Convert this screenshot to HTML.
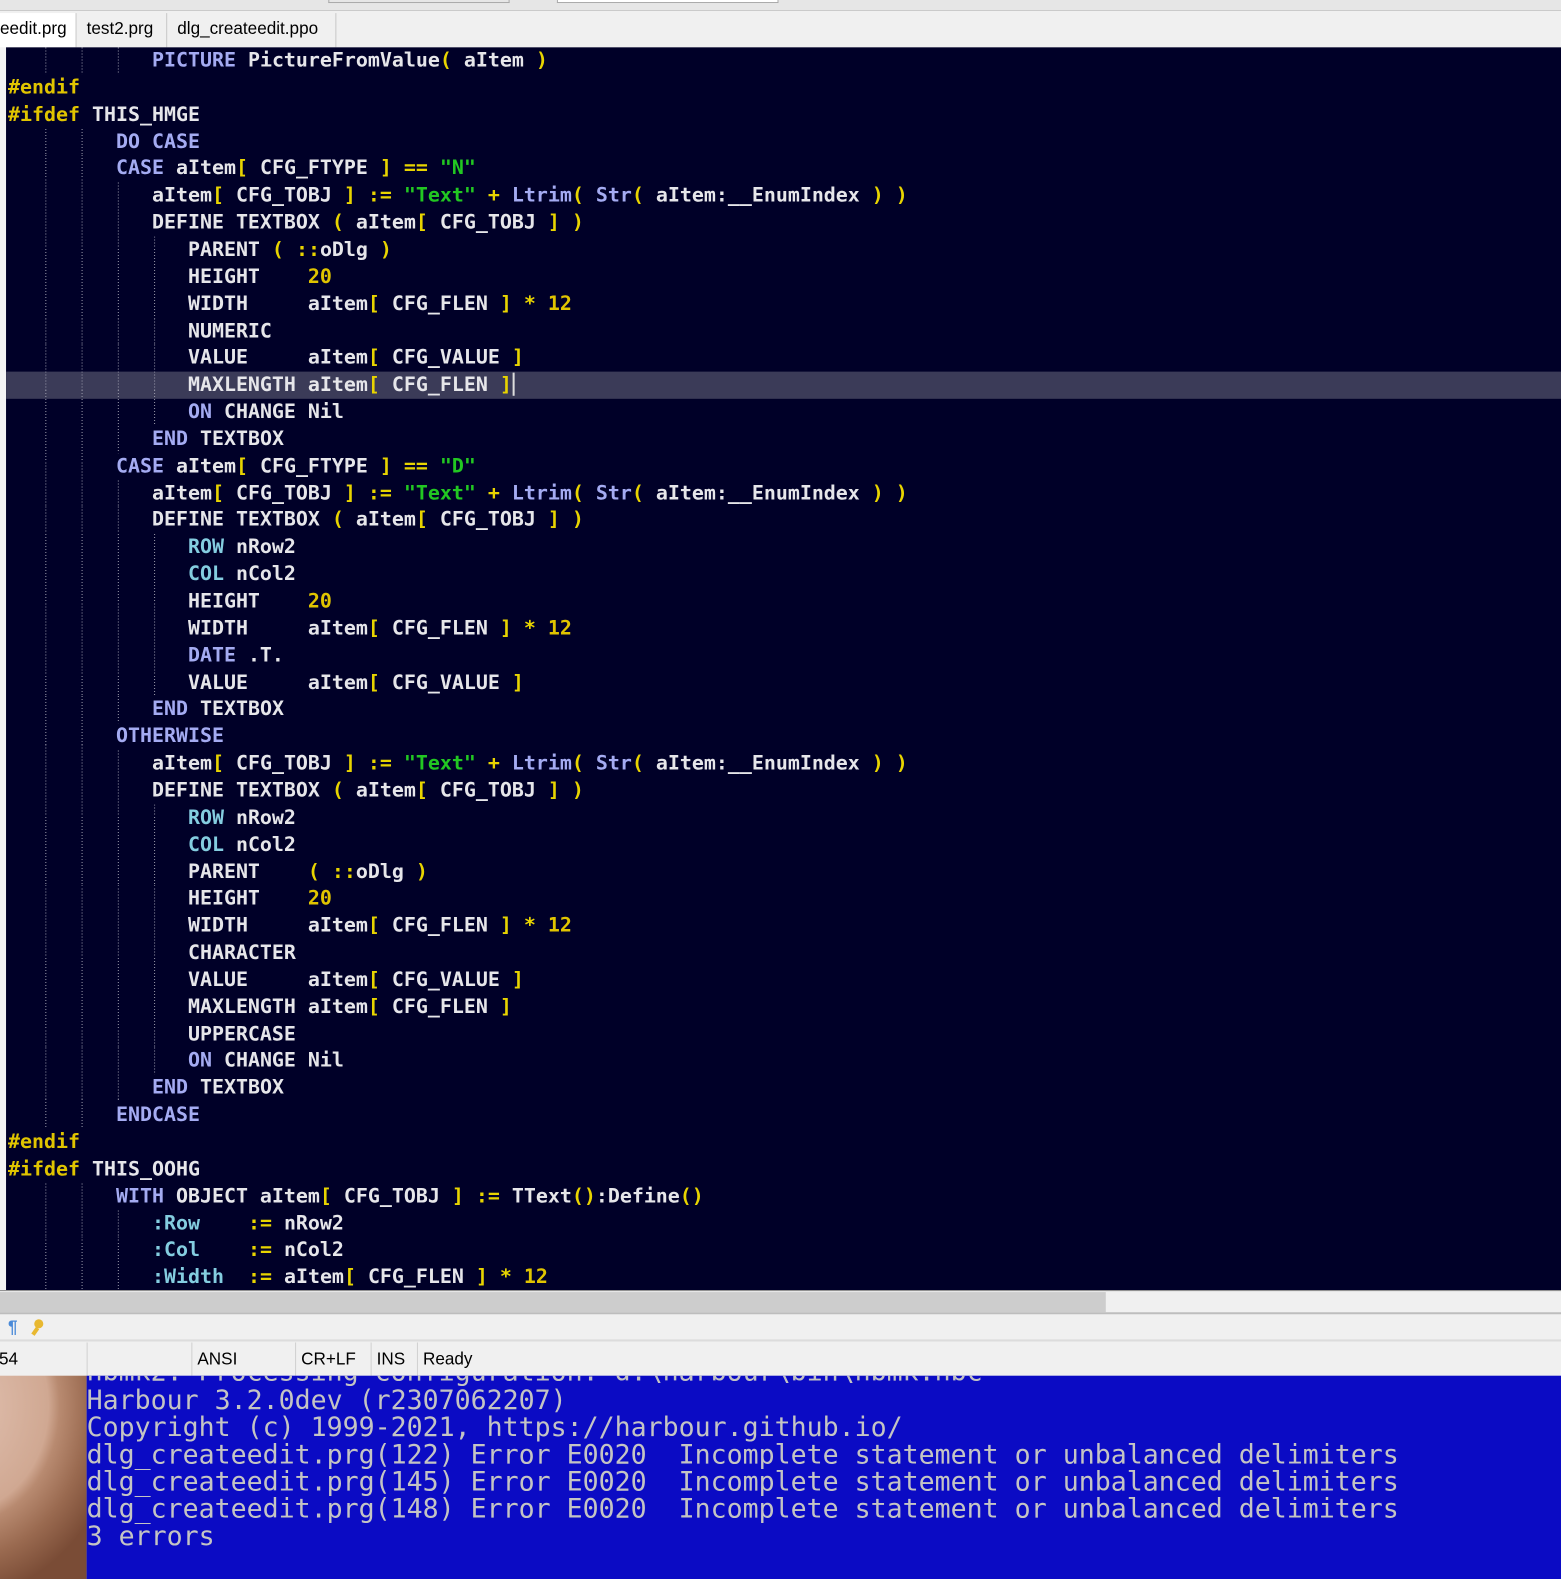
<!DOCTYPE html>
<html><head><meta charset="utf-8"><style>
*{margin:0;padding:0;box-sizing:border-box}
html,body{width:1561px;height:1579px;overflow:hidden;background:#f0f0f0}
#outer{position:absolute;left:0;top:0;width:1561px;height:1579px;overflow:hidden}
#wrap{position:absolute;left:0;top:0;width:1550px;height:1568px;overflow:hidden;transform:scale(1.0071);transform-origin:0 0;font-family:"Liberation Sans",sans-serif}
.abs{position:absolute}
#top{left:0;top:0;width:1550px;height:11px;background:#e6e6e6;border-bottom:1px solid #c8c8c8}
#tabs{left:0;top:11px;width:1550px;height:36px;background:#f0f0f0;font-size:17px;color:#000}
.tab{position:absolute;top:2px;height:34px;line-height:32px;border-right:1px solid #c8c8c8;padding-left:10px}
#ed{left:6px;top:47px;width:1544px;height:1234px;background:#000028;overflow:hidden}
#gut{left:0;top:47px;width:6px;height:1234px;background:#f4f4f4}
.l{position:absolute;left:0;width:1544px;height:26.85px;line-height:26.85px;white-space:pre;font-family:"DejaVu Sans Mono",monospace;font-weight:bold;font-size:19.8px;color:#e6e6ea;padding-left:2px;background-repeat:no-repeat;background-size:1px 100%}
.k{color:#a4abf2}.c{color:#84cde0}.y{color:#e8d400}.s{color:#22c722}.p{color:#e0c400}
.cur{background-color:#3b3b58}
#hs{left:0;top:1281px;width:1550px;height:24px;background:#f0f0f0;border-top:1px solid #888;border-bottom:2px solid #bdbdbd}
#thumb{left:0;top:1283px;width:1098px;height:20px;background:#cdcdcd}
#tb{left:0;top:1306px;width:1550px;height:26px;background:#f0f0f0;border-bottom:2px solid #dcdcdc}
#sb{left:0;top:1333px;width:1550px;height:33px;background:#f0f0f0;font-size:17px;line-height:33px}
.sp{position:absolute;top:0;height:33px;border-left:1px solid #d0d0d0;padding-left:5px}
#con{left:86px;top:1366px;width:1464px;height:202px;background:#0b0bc4;overflow:hidden}
.cl{position:absolute;left:0;white-space:pre;font-family:"DejaVu Sans Mono",monospace;font-size:26.4px;line-height:27px;color:#c4c4c4}
#photo{left:0;top:1366px;width:86px;height:202px;background:radial-gradient(ellipse 160px 190px at -40px 30px,#e2c2b2 0%,#d0a892 55%,#b88a70 62%,#9a6a50 80%,#7a4c36 100%)}
</style></head><body><div id="outer"><div id="wrap">
<div id="top" class="abs"><div class="abs" style="left:326px;top:0;width:180px;height:3px;border:1px solid #aaa;border-top:0"></div><div class="abs" style="left:553px;top:0;width:220px;height:3px;background:#fff;border:1px solid #aaa;border-top:0"></div></div>
<div id="tabs" class="abs">
<div class="tab" style="left:0;width:76px;background:#fff;padding-left:0">eedit.prg</div>
<div class="tab" style="left:76px;width:90px">test2.prg</div>
<div class="tab" style="left:166px;width:168px">dlg_createedit.ppo</div>
</div>
<div id="gut" class="abs"></div>
<div id="ed" class="abs">
<div id="code"></div>
</div>
<div id="hs" class="abs"></div><div id="thumb" class="abs"></div>
<div id="tb" class="abs"><span class="abs" style="left:8px;top:2px;color:#4a8ad8;font-size:17px;font-weight:bold">¶</span><span class="abs" style="left:34px;top:4px;width:9px;height:9px;border-radius:50%;background:#e8b830"></span><span class="abs" style="left:33px;top:12px;width:4px;height:8px;background:#e8b830;transform:rotate(35deg)"></span></div>
<div id="sb" class="abs">
<div class="sp" style="left:-6px;border:0">54</div>
<div class="sp" style="left:86px;width:104px"></div>
<div class="sp" style="left:190px">ANSI</div>
<div class="sp" style="left:293px">CR+LF</div>
<div class="sp" style="left:368px">INS</div>
<div class="sp" style="left:414px">Ready</div>
</div>
<div id="photo" class="abs"></div>
<div id="con" class="abs">
<div class="cl" style="top:-17px">hbmk2: Processing configuration: d:\harbour\bin\hbmk.hbc</div>
<div class="cl" style="top:11px">Harbour 3.2.0dev (r2307062207)</div>
<div class="cl" style="top:38px">Copyright (c) 1999-2021, https://harbour.github.io/</div>
<div class="cl" style="top:65px">dlg_createedit.prg(122) Error E0020  Incomplete statement or unbalanced delimiters</div>
<div class="cl" style="top:92px">dlg_createedit.prg(145) Error E0020  Incomplete statement or unbalanced delimiters</div>
<div class="cl" style="top:119px">dlg_createedit.prg(148) Error E0020  Incomplete statement or unbalanced delimiters</div>
<div class="cl" style="top:146px">3 errors</div>
<div class="cl" style="top:200px">hbmk2: Error: Running Harbour compiler</div>
</div>
</div></div>
<script>
var Y='<span class="y">',S='<span class="s">',K='<span class="k">',C='<span class="c">',P='<span class="p">',E='</span>';
function ai(x){return 'aItem'+Y+'['+E+' '+x+' '+Y+']'+E;}
var asg=ai('CFG_TOBJ')+' '+Y+':='+E+' '+S+'"Text"'+E+' '+Y+'+'+E+' '+K+'Ltrim'+E+Y+'('+E+' '+K+'Str'+E+Y+'('+E+' aItem:__EnumIndex '+Y+')'+E+' '+Y+')'+E;
var def='DEFINE TEXTBOX '+Y+'('+E+' '+ai('CFG_TOBJ')+' '+Y+')'+E;
var wid='WIDTH     '+ai('CFG_FLEN')+' '+Y+'*'+E+' '+P+'12'+E;
var L=[
[12,3,K+'PICTURE'+E+' PictureFromValue'+Y+'('+E+' aItem '+Y+')'+E],
[0,0,P+'#endif'+E],
[0,0,P+'#ifdef'+E+' THIS_HMGE'],
[9,2,K+'DO CASE'+E],
[9,2,K+'CASE'+E+' '+ai('CFG_FTYPE')+' '+Y+'=='+E+' '+S+'"N"'+E],
[12,3,asg],[12,3,def],
[15,4,'PARENT '+Y+'('+E+' '+Y+'::'+E+'oDlg '+Y+')'+E],
[15,4,'HEIGHT    '+P+'20'+E],[15,4,wid],[15,4,'NUMERIC'],
[15,4,'VALUE     '+ai('CFG_VALUE')],
[15,4,'MAXLENGTH '+ai('CFG_FLEN'),1],
[15,4,K+'ON'+E+' CHANGE Nil'],
[12,3,K+'END'+E+' TEXTBOX'],
[9,2,K+'CASE'+E+' '+ai('CFG_FTYPE')+' '+Y+'=='+E+' '+S+'"D"'+E],
[12,3,asg],[12,3,def],
[15,4,C+'ROW'+E+' nRow2'],[15,4,C+'COL'+E+' nCol2'],
[15,4,'HEIGHT    '+P+'20'+E],[15,4,wid],[15,4,K+'DATE'+E+' .T.'],
[15,4,'VALUE     '+ai('CFG_VALUE')],
[12,3,K+'END'+E+' TEXTBOX'],
[9,2,K+'OTHERWISE'+E],
[12,3,asg],[12,3,def],
[15,4,C+'ROW'+E+' nRow2'],[15,4,C+'COL'+E+' nCol2'],
[15,4,'PARENT    '+Y+'('+E+' '+Y+'::'+E+'oDlg '+Y+')'+E],
[15,4,'HEIGHT    '+P+'20'+E],[15,4,wid],[15,4,'CHARACTER'],
[15,4,'VALUE     '+ai('CFG_VALUE')],
[15,4,'MAXLENGTH '+ai('CFG_FLEN')],
[15,4,'UPPERCASE'],[15,4,K+'ON'+E+' CHANGE Nil'],
[12,3,K+'END'+E+' TEXTBOX'],
[9,2,K+'ENDCASE'+E],
[0,0,P+'#endif'+E],
[0,0,P+'#ifdef'+E+' THIS_OOHG'],
[9,2,K+'WITH'+E+' OBJECT '+ai('CFG_TOBJ')+' '+Y+':='+E+' TText'+Y+'()'+E+':Define'+Y+'()'+E],
[12,3,C+':Row'+E+'    '+Y+':='+E+' nRow2'],
[12,3,C+':Col'+E+'    '+Y+':='+E+' nCol2'],
[12,3,C+':Width'+E+'  '+Y+':='+E+' '+ai('CFG_FLEN')+' '+Y+'*'+E+' '+P+'12'+E]
];
var R='repeating-linear-gradient(#9a9aaa 0 1px,transparent 1px 3px)';
var pos=[39,75,111,147],h='';
L.forEach(function(a,i){
 var bi=[],bp=[];for(var g=0;g<a[1];g++){bi.push(R);bp.push(pos[g]+'px 0');}
 var st='top:'+(i*26.85)+'px;'+(bi.length?'background-image:'+bi.join(',')+';background-position:'+bp.join(',')+';':'');
 var txt=new Array(a[0]+1).join(' ')+a[2]+(a[3]?'<span style="border-left:2px solid #ddd;margin-left:1px"></span>':'');
 h+='<div class="l'+(a[3]?' cur':'')+'" style="'+st+'">'+txt+'</div>';
});
document.getElementById('code').innerHTML=h;
</script>
</body></html>
